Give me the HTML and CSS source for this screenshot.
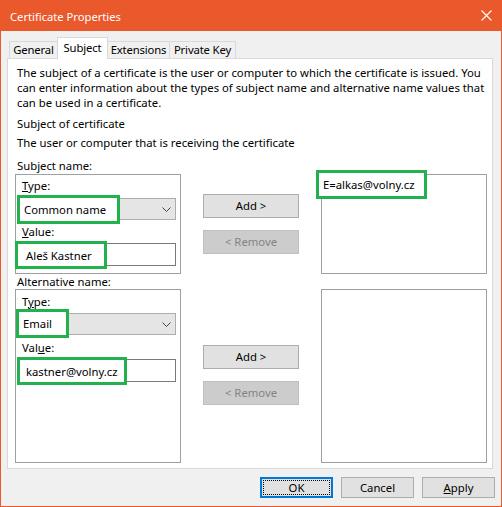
FILE: index.html
```html
<!DOCTYPE html>
<html>
<head>
<meta charset="utf-8">
<link rel="stylesheet" href="styles.css">
</head>
<body>
<div class="window">
  <div class="titlebar">
    <span class="title">Certificate Properties</span>
    <svg class="close" width="11" height="11" viewBox="0 0 11 11"><path d="M0.5 0.5 L10.5 10.5 M10.5 0.5 L0.5 10.5" stroke="#fff" stroke-width="1.1" fill="none"/></svg>
  </div>
  <div class="content">
    <div class="tabs">
      <div class="tab t-general">General</div>
      <div class="tab t-subject active">Subject</div>
      <div class="tab t-ext">Extensions</div>
      <div class="tab t-pk">Private Key</div>
    </div>
    <div class="panel">
      <p class="intro">The subject of a certificate is the user or computer to which the certificate is issued. You<br>can enter information about the types of subject name and alternative name values that<br>can be used in a certificate.</p>
      <div class="heading">Subject of certificate</div>
      <div class="sub">The user or computer that is receiving the certificate</div>
      <div class="grid">
        <div class="glabel row1">Subject name:</div>
        <div class="group row2">
          <div class="flabel"><u>T</u>ype:</div>
          <div class="combo">
            <span class="hl hl-cn">Common name</span>
            <svg class="chev" width="9" height="5" viewBox="0 0 9 5"><path d="M0.5 0.5 L4.5 4.5 L8.5 0.5" stroke="#444" stroke-width="1" fill="none"/></svg>
          </div>
          <div class="flabel f2"><u>V</u>alue:</div>
          <div class="input"><span class="hl hl-v1">Aleš Kastner</span></div>
        </div>
        <div class="btns row2">
          <div class="btn">Add &gt;</div>
          <div class="btn disabled">&lt; Remove</div>
        </div>
        <div class="list row2"><span class="hl hl-e">E=alkas@volny.cz</span></div>

        <div class="glabel row3">Alternative name:</div>
        <div class="group alt row4">
          <div class="flabel">T<u>y</u>pe:</div>
          <div class="combo">
            <span class="hl hl-em">Email</span>
            <svg class="chev" width="9" height="5" viewBox="0 0 9 5"><path d="M0.5 0.5 L4.5 4.5 L8.5 0.5" stroke="#444" stroke-width="1" fill="none"/></svg>
          </div>
          <div class="flabel f2">Val<u>u</u>e:</div>
          <div class="input"><span class="hl hl-v2">kastner@volny.cz</span></div>
        </div>
        <div class="btns alt row4">
          <div class="btn">Add &gt;</div>
          <div class="btn disabled">&lt; Remove</div>
        </div>
        <div class="list row4"></div>
      </div>
    </div>
    <div class="footer">
      <div class="fbtn ok">OK</div>
      <div class="fbtn">Cancel</div>
      <div class="fbtn"><u>A</u>pply</div>
    </div>
  </div>
</div>
</body>
</html>
```
FILE: styles.css
```css
html, body {
  margin: 0;
  padding: 0;
  background: #fff;
}
body {
  font-family: "Noto Sans", sans-serif;
  font-size: 11.3px;
  color: #000;
}
.window {
  width: 502px;
  height: 507px;
  box-sizing: border-box;
  border: 1px solid #E9592B;
  border-top: 0;
  background: #F0F0F0;
  display: flex;
  flex-direction: column;
}
.titlebar {
  height: 31px;
  flex: none;
  background: #E9592B;
  color: #fff;
  display: flex;
  align-items: center;
  justify-content: space-between;
  padding: 0 9px 0 9px;
  font-size: 11.2px;
}
.title {
  line-height: 15px;
  padding-top: 1px;
}
.close {
  display: block;
}
.content {
  padding: 0 8px 0 6px;
  display: flex;
  flex-direction: column;
}
.tabs {
  height: 27px;
  display: flex;
  align-items: flex-end;
  padding-left: 2px;
  position: relative;
  z-index: 2;
}
.tab {
  box-sizing: border-box;
  height: 17px;
  border: 1px solid #D9D9D9;
  border-bottom: 0;
  background: #F0F0F0;
  text-align: center;
  line-height: 16px;
  white-space: nowrap;
  margin-left: -1px;
  letter-spacing: -0.15px;
}
.t-general { width: 49px; margin-left: 0; }
.t-subject { width: 51px; }
.t-ext { width: 63px; }
.t-pk { width: 67px; }
.tab.active {
  height: 22px;
  margin-bottom: -1px;
  background: #fff;
  position: relative;
  line-height: 19px;
}
.panel {
  height: 411px;
  box-sizing: border-box;
  border: 1px solid #D9D9D9;
  background: #fff;
  padding-top: 6px;
}
.intro {
  margin: 0;
  padding-left: 9px;
  line-height: 15px;
  white-space: nowrap;
}
.heading {
  margin-top: 6px;
  padding-left: 9px;
  line-height: 15px;
}
.sub {
  margin-top: 4px;
  padding-left: 9px;
  line-height: 15px;
}
.grid {
  display: grid;
  grid-template-columns: 166px 96px 166px;
  grid-template-rows: 16px 100px 15px 174px;
  column-gap: 22px;
  margin: 8px 0 0 7px;
}
.row1 { grid-column: 1; grid-row: 1; }
.row2 { grid-row: 2; }
.row3 { grid-column: 1; grid-row: 3; }
.row4 { grid-row: 4; }
.glabel {
  line-height: 15px;
  padding-left: 2px;
  white-space: nowrap;
}
.group {
  grid-column: 1;
  box-sizing: border-box;
  border: 1px solid #A0A0A0;
  padding: 3px 4px 0 4px;
}
.group.alt { padding-top: 4px; }
.flabel {
  line-height: 15px;
  padding-left: 2px;
}
.combo {
  position: relative;
  box-sizing: border-box;
  height: 22px;
  margin-top: 5px;
  border: 1px solid #ADADAD;
  background: #E5E5E5;
  display: flex;
  align-items: center;
  justify-content: flex-end;
  padding-right: 4px;
}
.group.alt .combo { margin-top: 4px; }
.flabel.f2 { margin-top: 4px; }
.group.alt .flabel.f2 { margin-top: 5px; }
.chev { display: block; }
.input {
  position: relative;
  box-sizing: border-box;
  height: 23px;
  margin-top: 4px;
  border: 1px solid #7A7A7A;
  background: #fff;
}
.btns {
  grid-column: 2;
  display: flex;
  flex-direction: column;
  gap: 12px;
  padding-top: 20px;
}
.btns.alt { padding-top: 56px; }
.btn {
  box-sizing: border-box;
  height: 24px;
  border: 1px solid #ADADAD;
  background: #E1E1E1;
  text-align: center;
  line-height: 21px;
}
.btn.disabled {
  background: #CCCCCC;
  border-color: #BFBFBF;
  color: #838383;
}
.list {
  grid-column: 3;
  position: relative;
  box-sizing: border-box;
  border: 1px solid #A0A0A0;
  background: #fff;
}
.hl {
  position: absolute;
  box-sizing: border-box;
  border: 3px solid #22B14C;
  background: #fff;
  display: flex;
  align-items: center;
  white-space: nowrap;
  color: #000;
}
.hl-cn { left: -4px; top: -4px; width: 103px; height: 29px; padding-left: 4px; }
.hl-v1 { left: -6px; top: -3px; width: 92px; height: 28px; padding-left: 8px; }
.hl-em { left: -5px; top: -5px; width: 53px; height: 29px; padding-left: 4px; }
.hl-v2 { left: -4px; top: -3px; width: 110px; height: 28px; padding-left: 6px; }
.hl-e { left: -6px; top: -5px; width: 111px; height: 29px; padding-left: 4px; }
.footer {
  display: flex;
  justify-content: flex-end;
  gap: 8px;
  padding-top: 8px;
  margin-right: -2px;
}
.fbtn {
  box-sizing: border-box;
  width: 73px;
  height: 21px;
  border: 1px solid #ADADAD;
  background: #E1E1E1;
  text-align: center;
  line-height: 19px;
}
.fbtn.ok {
  border: 2px solid #0078D7;
  line-height: 17px;
  outline: 1px dotted #000;
  outline-offset: -4px;
}
```
